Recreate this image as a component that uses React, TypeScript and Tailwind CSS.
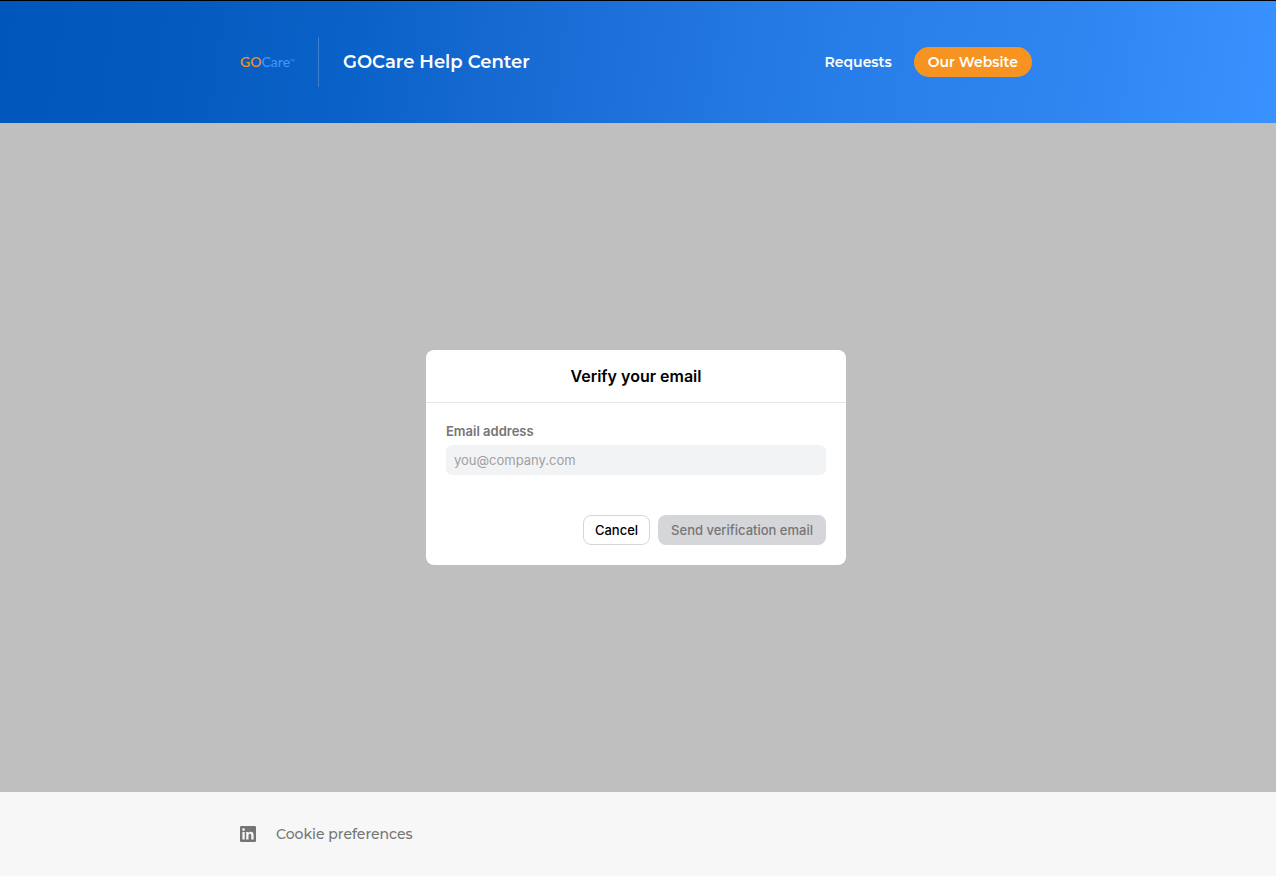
import { useState } from "react";

function Logo() {
  return (
    <a
      href="#"
      aria-label="GOCare"
      className="flex w-[54px] items-center font-['Lato',sans-serif] text-[14px] leading-4 font-medium text-[#3f94fd]"
    >
      <span className="text-[#f79421]">GO</span>
      <span>Care</span>
      <sup className="text-[3px]">TM</sup>
    </a>
  );
}

function LinkedInIcon() {
  return (
    <svg width="16" height="16" viewBox="0 0 16 16" fill="none" aria-hidden="true">
      <path
        fillRule="evenodd"
        clipRule="evenodd"
        fill="#757575"
        d="M1.2 0A1.2 1.2 0 0 0 0 1.2v13.6A1.2 1.2 0 0 0 1.2 16h13.6a1.2 1.2 0 0 0 1.2-1.2V1.2A1.2 1.2 0 0 0 14.8 0H1.2ZM2.4 6h2.3v7.6H2.4V6Zm1.15-3.8a1.35 1.35 0 1 1 0 2.7 1.35 1.35 0 0 1 0-2.7ZM6.2 6h2.2v1.05c.35-.65 1.15-1.25 2.3-1.25 2.35 0 2.9 1.5 2.9 3.65v4.15h-2.35V9.9c0-.95-.05-2.05-1.3-2.05-1.3 0-1.45 1-1.45 2v3.75H6.2V6Z"
      />
    </svg>
  );
}

function Header() {
  return (
    <header className="border-t border-black bg-[linear-gradient(98deg,#0056bb_0%,#055abf_14%,#0a62c8_28%,#176ad2_40%,#2073dd_52%,#277ee8_66%,#2f86f1_84%,#3992ff_100%)] px-6 text-white">
      <div className="mx-auto flex h-[122px] max-w-[796px] items-center justify-between pr-1">
        <div className="flex items-center">
          <Logo />
          <div className="ml-6 h-[50px] w-px bg-white/20" />
          <h1 className="ml-6 font-['Montserrat',Inter,sans-serif] text-[18px] leading-[25px] font-semibold">
            GOCare Help Center
          </h1>
        </div>
        <nav className="flex items-center gap-[22px] font-['Montserrat',Inter,sans-serif] text-[14px] leading-5 font-semibold">
          <a href="#requests">Requests</a>
          <a href="#website" className="rounded-full bg-[#f79421] px-[14px] py-[5px]">
            Our Website
          </a>
        </nav>
      </div>
    </header>
  );
}

function VerifyEmailDialog() {
  const [email, setEmail] = useState("");

  return (
    <div
      role="dialog"
      aria-labelledby="verify-title"
      className="w-full max-w-[420px] rounded-lg bg-white font-['Inter',sans-serif]"
    >
      <h2
        id="verify-title"
        className="border-b border-[#e6e6e8] py-[14px] text-center text-base leading-6 font-semibold text-black"
      >
        Verify your email
      </h2>
      <form className="p-5" onSubmit={(e) => e.preventDefault()}>
        <label
          htmlFor="email"
          className="mb-[6px] block text-[13px] leading-4 font-semibold text-[#757575]"
        >
          Email address
        </label>
        <input
          id="email"
          type="email"
          value={email}
          onChange={(e) => setEmail(e.target.value)}
          placeholder="you@company.com"
          className="block h-[30px] w-full rounded-md bg-[#f2f3f5] px-2 text-[13px] text-black outline-none placeholder:text-[#a0a0a0]"
        />
        <div className="mt-10 flex justify-end gap-2 text-[13px] leading-5 font-medium">
          <button
            type="button"
            className="h-[30px] rounded-lg border border-[#d5d6da] px-[11px] text-black"
          >
            Cancel
          </button>
          <button
            type="submit"
            disabled={!email}
            className="h-[30px] rounded-lg bg-[#d5d6da] px-[13px] text-[#757575]"
          >
            Send verification email
          </button>
        </div>
      </form>
    </div>
  );
}

function Footer() {
  return (
    <footer className="bg-[#f7f7f7] px-6">
      <div className="mx-auto flex h-[84px] max-w-[796px] items-center gap-5 pr-1">
        <a href="#linkedin" aria-label="LinkedIn">
          <LinkedInIcon />
        </a>
        <button
          type="button"
          className="font-['Montserrat',Inter,sans-serif] text-[14px] leading-5 font-medium text-[#757575]"
        >
          Cookie preferences
        </button>
      </div>
    </footer>
  );
}

export default function App() {
  return (
    <div className="flex min-h-screen flex-col bg-[#bfbfbf]">
      <Header />
      <main className="flex flex-1 items-center justify-center pr-1">
        <VerifyEmailDialog />
      </main>
      <Footer />
    </div>
  );
}
